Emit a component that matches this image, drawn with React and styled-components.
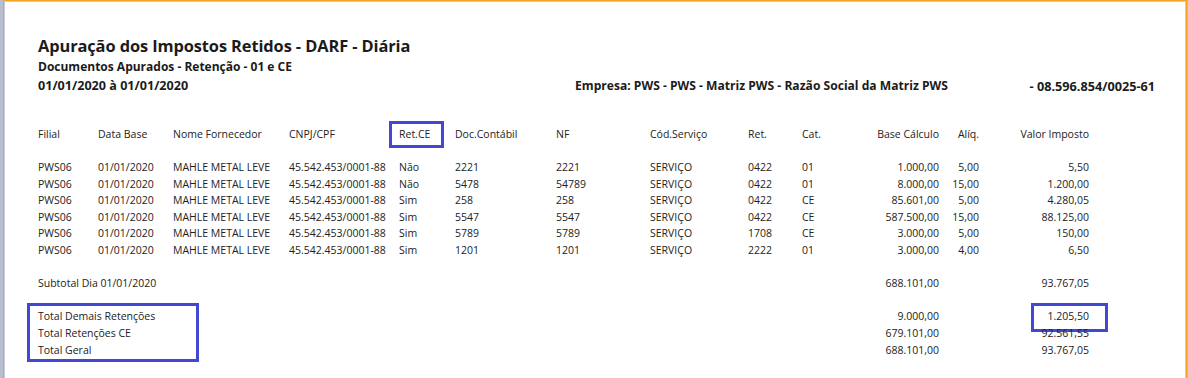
import React from "react";
import styled, { createGlobalStyle } from "styled-components";

const GlobalStyle = createGlobalStyle`
  html, body {
    margin: 0;
    padding: 0;
    background: #ffffff;
  }
  body {
    font-family: "Open Sans", "Noto Sans", sans-serif;
    color: #1b1b1b;
  }
`;

const Frame = styled.div`
  width: 1188px;
  height: 378px;
  box-sizing: border-box;
  border-left: 3px solid #b7bfcc;
  border-right: 1px solid #b7bfcc;
  background: #ffffff;
  overflow: hidden;
`;

const Window = styled.div`
  height: 100%;
  box-sizing: border-box;
  border: 1px solid #f2a623;
  border-bottom: none;
`;

const Sheet = styled.div`
  height: 100%;
  box-sizing: border-box;
  border: 1px solid #c9cadf;
  border-bottom: none;
  padding: 33px 0 0 33px;
`;

const Title = styled.h1`
  margin: 0;
  font-size: 16.4px;
  font-weight: 700;
  line-height: 22px;
  letter-spacing: -0.1px;
`;

const SubTitle = styled.h2`
  margin: 0;
  font-size: 12px;
  font-weight: 700;
  line-height: 20px;
`;

const InfoRow = styled.div`
  display: flex;
  align-items: center;
  font-weight: 700;
  line-height: 18px;
  width: 1117px;
`;

const InfoDate = styled.span`
  width: 537px;
  font-size: 12.6px;
`;

const InfoCompany = styled.span`
  flex: 1;
  font-size: 12.1px;
`;

const InfoCnpj = styled.span`
  font-size: 12.7px;
`;

const Table = styled.div`
  display: grid;
  grid-template-columns: 60px 75px 116px 110px 56px 101px 94px 98px 54px 40px 97px 40px 110px;
  margin-top: 31px;
  font-size: 10.5px;
  line-height: 16.6px;
  color: #222222;
`;

const Cell = styled.div`
  position: relative;
  white-space: nowrap;
  text-align: ${(p) => (p.$right ? "right" : "left")};
  grid-column: ${(p) => p.$span || "auto"};
  line-height: ${(p) => (p.$tall ? "17px" : "inherit")};
`;

const HeadCell = styled(Cell)`
  margin-bottom: 16.4px;
`;

const Gap = styled.div`
  grid-column: 1 / -1;
  height: ${(p) => p.$h}px;
`;

const Mark = styled.span`
  position: absolute;
  border: 3px solid #4348d2;
  pointer-events: none;
  top: ${(p) => p.$t}px;
  left: ${(p) => p.$l}px;
  width: ${(p) => p.$w}px;
  height: ${(p) => p.$h}px;
  box-sizing: border-box;
`;

const headers = [
  "Filial",
  "Data Base",
  "Nome Fornecedor",
  "CNPJ/CPF",
  "Ret.CE",
  "Doc.Contábil",
  "NF",
  "Cód.Serviço",
  "Ret.",
  "Cat.",
  "Base Cálculo",
  "Alíq.",
  "Valor Imposto",
];

const rightCols = [10, 11, 12];

const rows = [
  ["PWS06", "01/01/2020", "MAHLE METAL LEVE", "45.542.453/0001-88", "Não", "2221", "2221", "SERVIÇO", "0422", "01", "1.000,00", "5,00", "5,50"],
  ["PWS06", "01/01/2020", "MAHLE METAL LEVE", "45.542.453/0001-88", "Não", "5478", "54789", "SERVIÇO", "0422", "01", "8.000,00", "15,00", "1.200,00"],
  ["PWS06", "01/01/2020", "MAHLE METAL LEVE", "45.542.453/0001-88", "Sim", "258", "258", "SERVIÇO", "0422", "CE", "85.601,00", "5,00", "4.280,05"],
  ["PWS06", "01/01/2020", "MAHLE METAL LEVE", "45.542.453/0001-88", "Sim", "5547", "5547", "SERVIÇO", "0422", "CE", "587.500,00", "15,00", "88.125,00"],
  ["PWS06", "01/01/2020", "MAHLE METAL LEVE", "45.542.453/0001-88", "Sim", "5789", "5789", "SERVIÇO", "1708", "CE", "3.000,00", "5,00", "150,00"],
  ["PWS06", "01/01/2020", "MAHLE METAL LEVE", "45.542.453/0001-88", "Sim", "1201", "1201", "SERVIÇO", "2222", "01", "3.000,00", "4,00", "6,50"],
];

const totals = [
  ["Total Demais Retenções", "9.000,00", "1.205,50"],
  ["Total Retenções CE", "679.101,00", "92.561,55"],
  ["Total Geral", "688.101,00", "93.767,05"],
];

export default function App() {
  return (
    <>
      <GlobalStyle />
      <Frame>
        <Window>
          <Sheet>
            <Title>Apuração dos Impostos Retidos - DARF - Diária</Title>
            <SubTitle>Documentos Apurados - Retenção - 01 e CE</SubTitle>
            <InfoRow>
              <InfoDate>01/01/2020 à 01/01/2020</InfoDate>
              <InfoCompany>Empresa: PWS - PWS - Matriz PWS - Razão Social da Matriz PWS</InfoCompany>
              <InfoCnpj>- 08.596.854/0025-61</InfoCnpj>
            </InfoRow>

            <Table>
              {headers.map((h, i) => (
                <HeadCell key={h} $right={rightCols.includes(i)}>
                  {h}
                  {i === 4 && <Mark $t={-5} $l={-10} $w={55} $h={27} />}
                </HeadCell>
              ))}

              {rows.map((r, ri) =>
                r.map((v, ci) => (
                  <Cell key={ri + "-" + ci} $right={rightCols.includes(ci)}>
                    {v}
                  </Cell>
                ))
              )}

              <Gap $h={16.2} />
              <Cell $span="1 / 11">Subtotal Dia 01/01/2020</Cell>
              <Cell $right>688.101,00</Cell>
              <Cell />
              <Cell $right>93.767,05</Cell>

              <Gap $h={16.2} />
              {totals.map((t, i) => (
                <React.Fragment key={t[0]}>
                  <Cell $span="1 / 11" $tall>
                    {t[0]}
                    {i === 0 && <Mark $t={-5} $l={-11} $w={172} $h={59} />}
                  </Cell>
                  <Cell $right $tall>{t[1]}</Cell>
                  <Cell $tall />
                  <Cell $right $tall>
                    {t[2]}
                    {i === 0 && <Mark $t={-5} $l={52} $w={77} $h={29} />}
                  </Cell>
                </React.Fragment>
              ))}
            </Table>
          </Sheet>
        </Window>
      </Frame>
    </>
  );
}
